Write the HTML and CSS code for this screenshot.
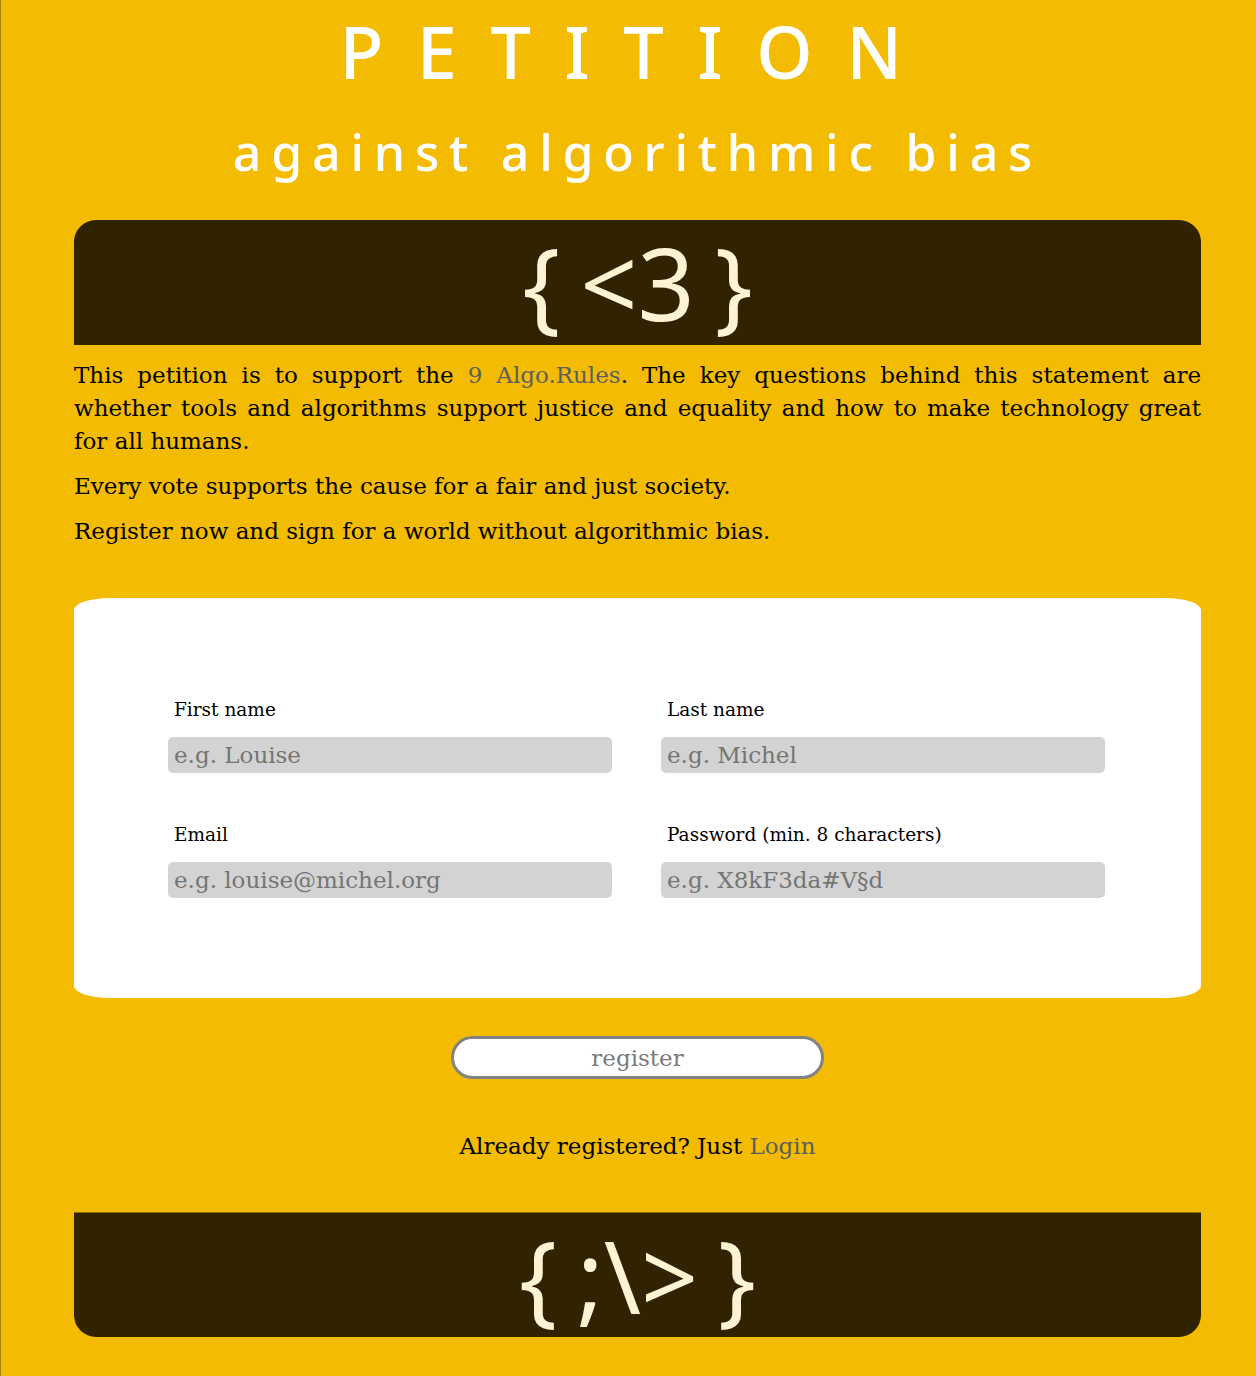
FILE: index.html
```html
<!DOCTYPE html>
<html lang="en">
<head>
<meta charset="utf-8">
<title>Petition against algorithmic bias</title>
<link rel="stylesheet" href="styles.css">
</head>
<body>
  <header class="hero">
    <h1 class="hero-title">PETITION</h1>
    <p class="hero-subtitle">against algorithmic bias</p>
  </header>
  <main class="page">
    <div class="banner banner-top">{ &lt;3 }</div>
    <section class="intro">
      <p>This petition is to support the <a class="link" href="#">9 Algo.Rules</a>. The key questions behind this statement are whether tools and algorithms support justice and equality and how to make technology great for all humans.</p>
      <p>Every vote supports the cause for a fair and just society.</p>
      <p>Register now and sign for a world without algorithmic bias.</p>
    </section>
    <form class="card">
      <div class="field">
        <label class="field-label" for="first">First name</label>
        <input class="field-input" id="first" type="text" placeholder="e.g. Louise">
      </div>
      <div class="field">
        <label class="field-label" for="last">Last name</label>
        <input class="field-input" id="last" type="text" placeholder="e.g. Michel">
      </div>
      <div class="field">
        <label class="field-label" for="email">Email</label>
        <input class="field-input" id="email" type="email" placeholder="e.g. louise@michel.org">
      </div>
      <div class="field">
        <label class="field-label" for="pw">Password (min. 8 characters)</label>
        <input class="field-input" id="pw" type="text" placeholder="e.g. X8kF3da#V§d">
      </div>
    </form>
    <div class="actions">
      <button class="register" type="button">register</button>
    </div>
    <p class="login">Already registered? Just <a class="link" href="#">Login</a></p>
    <div class="banner banner-bottom">{ ;\&gt; }</div>
  </main>
</body>
</html>
```
FILE: styles.css
```css
html, body {
  margin: 0;
  padding: 0;
}

body {
  background: #f3bc03;
  border-left: 1px solid #a88408;
  padding: 0 55px 0 73px;
  min-height: 1376px;
  box-sizing: border-box;
  font-family: "DejaVu Serif", serif;
  color: #000;
}

.hero {
  text-align: center;
  color: #fff;
  font-family: "Noto Sans", "Open Sans", sans-serif;
}

.hero-title {
  margin: 15px 0 0;
  font-size: 72px;
  line-height: 72px;
  font-weight: 500;
  letter-spacing: 33.5px;
}

.hero-subtitle {
  margin: 40px 0 0;
  font-size: 50px;
  line-height: 50px;
  font-weight: 500;
  letter-spacing: 9.8px;
}

.page {
  display: flex;
  flex-direction: column;
}

.banner {
  background: #312300;
  color: #fff3d6;
  height: 125px;
  text-align: center;
  font-family: "Noto Sans", "Open Sans", sans-serif;
  font-size: 100px;
  line-height: 125px;
  word-spacing: -6px;
  white-space: pre;
}

.banner-top {
  margin-top: 43px;
  border-radius: 22px 22px 0 0;
}

.banner-bottom {
  margin-top: 49px;
  border-top: 1px solid #8c6c06;
  height: 124px;
  line-height: 124px;
  border-radius: 0 0 22px 22px;
}

.intro {
  margin-top: 2px;
}

.intro p {
  margin: 12px 0 0;
  font-size: 23px;
  line-height: 33px;
  text-align: justify;
}

.link {
  color: #5e5e5e;
  text-decoration: none;
}

.card {
  margin-top: 50px;
  background: #fff;
  border-radius: 36px / 12px;
  padding: 100px 96px 100px 94px;
  display: grid;
  grid-template-columns: 444px 444px;
  column-gap: 49px;
  row-gap: 50px;
}

.field {
  display: flex;
  flex-direction: column;
  gap: 15px;
}

.field-label {
  font-size: 18.5px;
  line-height: 24px;
  padding-left: 6px;
}

.field-input {
  height: 36px;
  box-sizing: border-box;
  border: none;
  border-radius: 5px;
  background: #d3d3d3;
  padding: 0 6px;
  font-family: inherit;
  font-size: 23px;
  color: #333;
  outline: none;
}

.field-input::placeholder {
  color: #757575;
  opacity: 1;
}

.actions {
  margin-top: 38px;
  display: flex;
  justify-content: center;
}

.register {
  width: 373px;
  height: 43px;
  box-sizing: border-box;
  border: 3px solid #828282;
  border-radius: 22px;
  background: #fff;
  color: #7a7a7a;
  font-family: inherit;
  font-size: 23px;
  padding: 0;
}

.login {
  margin: 51px 0 0;
  text-align: center;
  font-size: 23px;
  line-height: 33px;
}
```
